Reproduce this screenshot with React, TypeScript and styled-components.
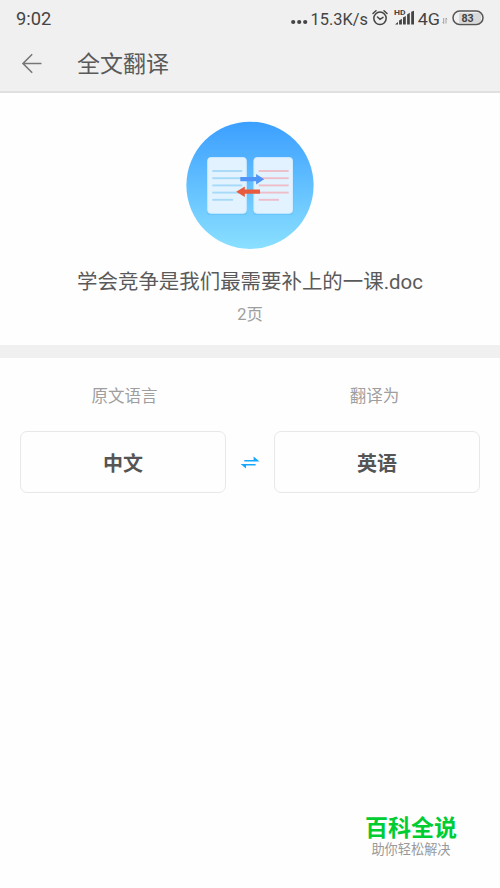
import React from 'react';
import styled, { createGlobalStyle } from 'styled-components';

const GlobalStyle = createGlobalStyle`
  * { box-sizing: border-box; }
  body {
    margin: 0;
    background: #fefefe;
    font-family: Roboto, "Noto Sans CJK SC", sans-serif;
    color: #5a5a5a;
  }
`;

const Screen = styled.div`
  display: flex;
  flex-direction: column;
  width: 500px;
  height: 888px;
  background: #fefefe;
  overflow: hidden;
  white-space: nowrap;
`;

const Header = styled.header`
  height: 93px;
  background: #f0f0f0;
  border-bottom: 2px solid #e0e0e0;
`;

const StatusBar = styled.div`
  display: flex;
  align-items: center;
  justify-content: space-between;
  height: 36px;
  padding: 0 16px;
  color: #444;
`;

const Clock = styled.span`
  font-size: 18.3px;
  line-height: 36px;
  padding-top: 1px;
`;

const StatusIcons = styled.svg`
  width: 196px;
  height: 36px;
  display: block;
`;

const TitleBar = styled.div`
  display: flex;
  align-items: center;
  height: 55px;
  padding-left: 21px;
`;

const BackIcon = styled.svg`
  width: 22px;
  height: 22px;
  margin-right: 34px;
`;

const Title = styled.h1`
  margin: 0;
  padding-top: 3px;
  font-size: 23px;
  line-height: 34px;
  font-weight: 400;
`;

const FileSection = styled.section`
  display: flex;
  flex-direction: column;
  align-items: center;
  height: 265px;
  padding-top: 28px;
  border-bottom: 13px solid #f0f0f0;
`;

const Emblem = styled.svg`
  width: 128px;
  height: 128px;
`;

const FileName = styled.div`
  margin-top: 18px;
  font-size: 20.45px;
  line-height: 30px;
`;

const PageCount = styled.div`
  margin-top: 6px;
  font-size: 16.4px;
  line-height: 24px;
  color: #9e9e9e;
`;

const Languages = styled.section`
  display: grid;
  grid-template-columns: 206px 48px 206px;
  grid-template-rows: 24px 62px;
  row-gap: 22px;
  padding: 27px 20px 0;
`;

const Label = styled.div<{ $column: number; $end?: number; $start?: number }>`
  grid-column: ${(p) => p.$column};
  text-align: center;
  font-size: 16.5px;
  line-height: 24px;
  color: #9e9e9e;
  padding-left: ${(p) => p.$start ?? 0}px;
  padding-right: ${(p) => p.$end ?? 0}px;
`;

const LanguageButton = styled.button`
  border: 1px solid #e8e8e8;
  border-radius: 7px;
  background: #fefefe;
  color: #555;
  font: 700 20px/30px "Noto Sans CJK SC", sans-serif;
  padding: 1px 0 0;
`;

const SwapIcon = styled.svg`
  width: 20px;
  height: 14px;
  align-self: center;
  justify-self: center;
`;

const Brand = styled.footer`
  display: flex;
  flex-direction: column;
  align-items: center;
  align-self: flex-end;
  margin: auto 43px 30px 0;
`;

const BrandName = styled.div`
  font-size: 23px;
  line-height: 26px;
  font-weight: 700;
  color: #0c3;
`;

const BrandLine = styled.div`
  font-size: 13.2px;
  line-height: 16px;
  color: #999;
`;

const LINE_YS = [49, 56.2, 63.4, 70.6, 77.8];

export default function App() {
  return (
    <>
      <GlobalStyle />
      <Screen>
        <Header>
          <StatusBar>
            <Clock>9:02</Clock>
            <StatusIcons viewBox="288 0 196 36" fill="#444" fontFamily="Roboto, sans-serif">
              <circle cx="293.2" cy="22" r="2.1" />
              <circle cx="299.2" cy="22" r="2.1" />
              <circle cx="305.2" cy="22" r="2.1" />
              <text x="310.5" y="24.5" fontSize="17.3" textLength="57.5" lengthAdjust="spacingAndGlyphs">15.3K/s</text>
              <g fill="none" stroke="#444" strokeWidth="1.5" strokeLinecap="round">
                <circle cx="380" cy="18.3" r="6.2" />
                <path d="M373 13.5l3-2.7M387 13.5l-3-2.7M377.5 17l2.5 2.3 3-2" />
              </g>
              <text x="394" y="15.3" fontSize="7.8" fontWeight="700" textLength="11.5" lengthAdjust="spacingAndGlyphs">HD</text>
              <path d="M395 24.5l3-2.5v2.5zM399.1 20.5l2.8-1.7v5.7h-2.8zM403 17.5l2.8-1.5v8.5h-2.8zM407.1 14.4l2.7-1.6v11.7h-2.7zM411.2 11.8l2.8-1v13.7h-2.8z" />
              <text x="417.7" y="24.5" fontSize="17.3" textLength="22.3" lengthAdjust="spacingAndGlyphs">4G</text>
              <path d="M443.7 18v5.5l-1.2-1.2M446 23.5V18l1.2 1.2" fill="none" stroke="#999" strokeWidth=".9" />
              <rect x="459" y="13" width="22" height="10" fill="#d9d9d9" />
              <rect x="453" y="11" width="30" height="13.4" rx="6.7" fill="none" stroke="#555" strokeWidth="1.5" />
              <text x="461.5" y="21.6" fontSize="10.8" fontWeight="700" textLength="12.2" lengthAdjust="spacingAndGlyphs">83</text>
            </StatusIcons>
          </StatusBar>
          <TitleBar>
            <BackIcon viewBox="0 0 22 22" fill="none" stroke="#777" strokeWidth="1.6">
              <path d="M20.5 10.5H2M11.2 1.3L2 10.5l9.2 9.2" />
            </BackIcon>
            <Title>全文翻译</Title>
          </TitleBar>
        </Header>

        <FileSection>
          <Emblem viewBox="0 0 128 128">
            <defs>
              <linearGradient id="sky" x1="0" y1="0" x2="0" y2="1">
                <stop offset="0" stopColor="#3b9fff" />
                <stop offset="1" stopColor="#8ae0ff" />
              </linearGradient>
            </defs>
            <circle cx="64" cy="64.3" r="63.6" fill="url(#sky)" />
            <g fill="#48a8e8" opacity=".25">
              <rect x="21" y="37" width="40" height="57" rx="3" />
              <rect x="67.3" y="37" width="40" height="57" rx="3" />
            </g>
            <g fill="#e2f3ff" stroke="#d1ebff" strokeWidth="1">
              <rect x="21.7" y="36.6" width="38.6" height="55.7" rx="3" />
              <rect x="67.9" y="36.6" width="38.6" height="55.7" rx="3" />
            </g>
            {LINE_YS.map((y, i) => (
              <g key={y} strokeWidth="1.9" transform="translate(0 1)">
                <path d={`M26.3 ${y}h${i === 4 ? 20.7 : 30}`} stroke="#a7d9f8" />
                <path d={`M72.7 ${y}h${i === 4 ? 20.3 : 30}`} stroke="#edbdc9" />
              </g>
            ))}
            <path d="M54.3 56h15.8v-3.1l8.1 5.4-8.1 5.1v-3.2H54.3z" fill="#5095f5" />
            <path d="M74 68.5H58.8v-3.1l-8.6 5.4 8.6 5.1v-3.2H74z" fill="#e95b3d" />
          </Emblem>
          <FileName>学会竞争是我们最需要补上的一课.doc</FileName>
          <PageCount>2页</PageCount>
        </FileSection>

        <Languages>
          <Label $column={1} $start={3}>原文语言</Label>
          <Label $column={3} $end={5}>翻译为</Label>
          <LanguageButton>中文</LanguageButton>
          <SwapIcon viewBox="0 0 20 14" fill="#16a5ff">
            <path d="M4.3 5H13.6V1.5l5.9 4.9H4.3zM15.6 9.1H.6L6 13.6V10.5h9.6z" />
          </SwapIcon>
          <LanguageButton>英语</LanguageButton>
        </Languages>

        <Brand>
          <BrandName>百科全说</BrandName>
          <BrandLine>助你轻松解决</BrandLine>
        </Brand>
      </Screen>
    </>
  );
}
